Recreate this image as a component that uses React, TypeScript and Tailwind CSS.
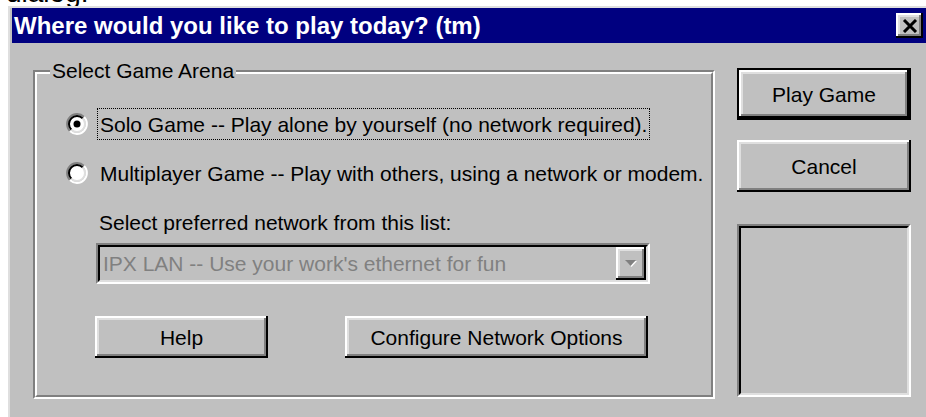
import React from "react";

const FONT = { fontFamily: '"Liberation Sans", Arial, sans-serif' };

const raised =
  "shadow-[inset_-2px_-2px_0_#000,inset_2px_2px_0_#fff,inset_-4px_-4px_0_#808080,inset_4px_4px_0_#dfdfdf]";

function Radio({ checked }: { checked?: boolean }) {
  return (
    <svg width="22" height="22" viewBox="0 0 22 22" className="shrink-0">
      <circle cx="11" cy="11" r="7.5" fill="#fff" />
      <path d="M3.93 18.07 A10 10 0 0 1 18.07 3.93" stroke="#808080" strokeWidth="2" fill="none" />
      <path d="M18.07 3.93 A10 10 0 0 1 3.93 18.07" stroke="#fff" strokeWidth="2" fill="none" />
      <path d="M5.34 16.66 A8 8 0 0 1 16.66 5.34" stroke="#000" strokeWidth="2" fill="none" />
      <path d="M16.66 5.34 A8 8 0 0 1 5.34 16.66" stroke="#dfdfdf" strokeWidth="2" fill="none" />
      {checked && <circle cx="11" cy="11" r="3.5" fill="#000" />}
    </svg>
  );
}

function Button({
  label,
  className,
  isDefault,
}: {
  label: string;
  className: string;
  isDefault?: boolean;
}) {
  if (isDefault) {
    return (
      <div className={`border-2 border-black bg-[#c0c0c0] ${className}`}>
        <div className={`w-full h-full flex items-center justify-center ${raised}`}>
          <span className="text-[21px] text-black leading-none">{label}</span>
        </div>
      </div>
    );
  }
  return (
    <div className={`bg-[#c0c0c0] flex items-center justify-center ${raised} ${className}`}>
      <span className="text-[21px] text-black leading-none">{label}</span>
    </div>
  );
}

export default function App() {
  return (
    <div className="w-[926px] h-[417px] bg-white overflow-hidden flex flex-col" style={FONT}>
      {/* caption text above the window, mostly scrolled out of view */}
      <div className="h-[6px] overflow-hidden pl-[6px] shrink-0">
        <div className="text-[28px] leading-[28px] mt-[-21px] text-black">dialog:</div>
      </div>

      {/* window */}
      <div className="ml-[8px] flex-1 bg-[#c0c0c0] border-l-2 border-t-2 border-[#dfdfdf] pl-[2px] flex flex-col">
        {/* title bar */}
        <div className="h-[35px] bg-[#000080] flex items-center justify-between shrink-0">
          <span className="pl-[2px] text-white font-bold text-[24px] leading-none tracking-[0px]">
            Where would you like to play today? (tm)
          </span>
          <div className={`w-[27px] h-[25px] mr-[3px] bg-[#c0c0c0] flex items-center justify-center ${raised}`}>
            <svg width="16" height="14" viewBox="0 0 16 14">
              <path d="M2 1 L14 13 M14 1 L2 13" stroke="#000" strokeWidth="3" />
            </svg>
          </div>
        </div>

        {/* body */}
        <div className="flex flex-row">
          {/* group box */}
          <div className="relative ml-[21px] mt-[27px] w-[682px] h-[329px] border-2 border-t-[#808080] border-l-[#808080] border-b-white border-r-white">
            <div className="w-full h-full border-2 border-t-white border-l-white border-b-[#808080] border-r-[#808080] flex flex-col">
              {/* radio rows */}
              <div className="mt-[34px] h-[32px] pl-[29px] flex items-center">
                <Radio checked />
                <span className="ml-[9px] h-[32px] px-[2px] border border-dotted border-black flex items-center text-[21px] text-black leading-none whitespace-nowrap">
                  Solo Game -- Play alone by yourself (no network required).
                </span>
              </div>
              <div className="mt-[17px] h-[32px] pl-[29px] flex items-center">
                <Radio />
                <span className="ml-[9px] h-[32px] px-[2px] border border-transparent flex items-center text-[21px] text-black leading-none whitespace-nowrap">
                  Multiplayer Game -- Play with others, using a network or modem.
                </span>
              </div>

              <div className="mt-[21px] h-[24px] pl-[62px] flex items-center text-[21px] text-black leading-none whitespace-nowrap">
                Select preferred network from this list:
              </div>

              {/* disabled combo box */}
              <div className="mt-[9px] ml-[59px] w-[554px] h-[41px] border-2 border-t-[#808080] border-l-[#808080] border-b-white border-r-white">
                <div className="w-full h-full border-2 border-t-black border-l-black border-b-[#dfdfdf] border-r-[#dfdfdf] flex items-center">
                  <span className="flex-1 pl-[3px] text-[21px] text-[#808080] leading-none whitespace-nowrap">
                    IPX LAN -- Use your work's ethernet for fun
                  </span>
                  <div className={`w-[30px] h-full bg-[#c0c0c0] flex items-center justify-center ${raised}`}>
                    <svg width="14" height="8" viewBox="0 0 14 8">
                      <polygon points="2,1 13,1 7.5,7" fill="#fff" />
                      <polygon points="1,0 12,0 6.5,6" fill="#808080" />
                    </svg>
                  </div>
                </div>
              </div>

              {/* buttons */}
              <div className="mt-[32px] ml-[58px] flex flex-row">
                <Button label="Help" className="w-[173px] h-[42px]" />
                <Button label="Configure Network Options" className="ml-[77px] w-[303px] h-[42px]" />
              </div>
            </div>

            {/* legend sits on the top border */}
            <div className="absolute left-[15px] top-[-13px] px-[2px] bg-[#c0c0c0] text-[21px] text-black leading-[24px] whitespace-nowrap">
              Select Game Arena
            </div>
          </div>

          {/* right column */}
          <div className="ml-[22px] mt-[25px] w-[174px] flex flex-col">
            <Button label="Play Game" className="h-[52px]" isDefault />
            <Button label="Cancel" className="mt-[20px] h-[52px]" />
            <div className="mt-[32px] h-[173px] border-2 border-t-[#808080] border-l-[#808080] border-b-white border-r-white">
              <div className="w-full h-full border-2 border-t-black border-l-black border-b-[#dfdfdf] border-r-[#dfdfdf]" />
            </div>
          </div>
        </div>
      </div>
    </div>
  );
}
